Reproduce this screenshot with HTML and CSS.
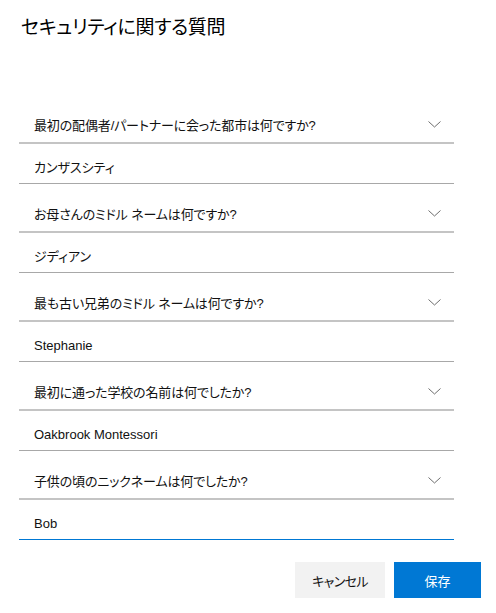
FILE: index.html
```html
<!DOCTYPE html>
<html lang="ja">
<head>
<meta charset="utf-8">
<title>セキュリティに関する質問</title>
<link rel="stylesheet" href="styles.css">
</head>
<body>
<main class="page">
  <h1 class="title">セキュリティに関する質問</h1>
  <form class="questions">
    <div class="select">
      <span class="select-label">最初の配偶者/パートナーに会った都市は何ですか?</span>
      <svg class="chevron" width="13" height="7" viewBox="0 0 13 7"><polyline points="0.5,0.5 6.5,6 12.5,0.5" /></svg>
    </div>
    <div class="answer">カンザスシティ</div>

    <div class="select">
      <span class="select-label">お母さんのミドル ネームは何ですか?</span>
      <svg class="chevron" width="13" height="7" viewBox="0 0 13 7"><polyline points="0.5,0.5 6.5,6 12.5,0.5" /></svg>
    </div>
    <div class="answer">ジディアン</div>

    <div class="select">
      <span class="select-label">最も古い兄弟のミドル ネームは何ですか?</span>
      <svg class="chevron" width="13" height="7" viewBox="0 0 13 7"><polyline points="0.5,0.5 6.5,6 12.5,0.5" /></svg>
    </div>
    <div class="answer">Stephanie</div>

    <div class="select">
      <span class="select-label">最初に通った学校の名前は何でしたか?</span>
      <svg class="chevron" width="13" height="7" viewBox="0 0 13 7"><polyline points="0.5,0.5 6.5,6 12.5,0.5" /></svg>
    </div>
    <div class="answer">Oakbrook Montessori</div>

    <div class="select">
      <span class="select-label">子供の頃のニックネームは何でしたか?</span>
      <svg class="chevron" width="13" height="7" viewBox="0 0 13 7"><polyline points="0.5,0.5 6.5,6 12.5,0.5" /></svg>
    </div>
    <div class="answer answer-focused">Bob</div>
  </form>
  <div class="actions">
    <button type="button" class="btn btn-secondary">キャンセル</button>
    <button type="button" class="btn btn-primary">保存</button>
  </div>
</main>
</body>
</html>
```
FILE: styles.css
```css
html, body {
  margin: 0;
  padding: 0;
  background: #ffffff;
}

body {
  font-family: "Liberation Sans", "Noto Sans CJK JP", sans-serif;
  font-feature-settings: "palt";
  color: #111111;
}

.page {
  padding: 14px 15px 0 19px;
}

.title {
  margin: 0;
  font-size: 19px;
  line-height: 28px;
  font-weight: 400;
  letter-spacing: -0.3px;
  color: #000000;
  padding-left: 2px;
}

.questions {
  width: 435px;
  margin-top: 53px;
  display: flex;
  flex-direction: column;
}

.select {
  display: flex;
  align-items: center;
  justify-content: space-between;
  padding: 21px 13px 6px 15px;
  height: 20px;
  border-bottom: 2px solid #c4c4c4;
  font-size: 13px;
  line-height: 20px;
}

.select-label {
  letter-spacing: -0.15px;
}

.chevron {
  flex: none;
  margin-top: -3px;
}

.chevron polyline {
  fill: none;
  stroke: #6e6e6e;
  stroke-width: 1;
}

.answer {
  padding: 14px 15px 5px 15px;
  height: 20px;
  font-size: 13px;
  line-height: 20px;
  border-bottom: 1px solid #a8a8a8;
}

.answer-focused {
  border-bottom-color: #0078d4;
}

.actions {
  display: flex;
  justify-content: flex-end;
  gap: 9px;
  margin-top: 22px;
}

.btn {
  font-family: inherit;
  font-feature-settings: "palt";
  font-size: 13px;
  height: 36px;
  min-width: 87px;
  padding: 0 17px;
  border: none;
  border-radius: 0;
  cursor: pointer;
}

.btn-secondary {
  background: #f2f2f2;
  color: #111111;
  letter-spacing: -0.6px;
}

.btn-primary {
  background: #0078d4;
  color: #ffffff;
}
```
